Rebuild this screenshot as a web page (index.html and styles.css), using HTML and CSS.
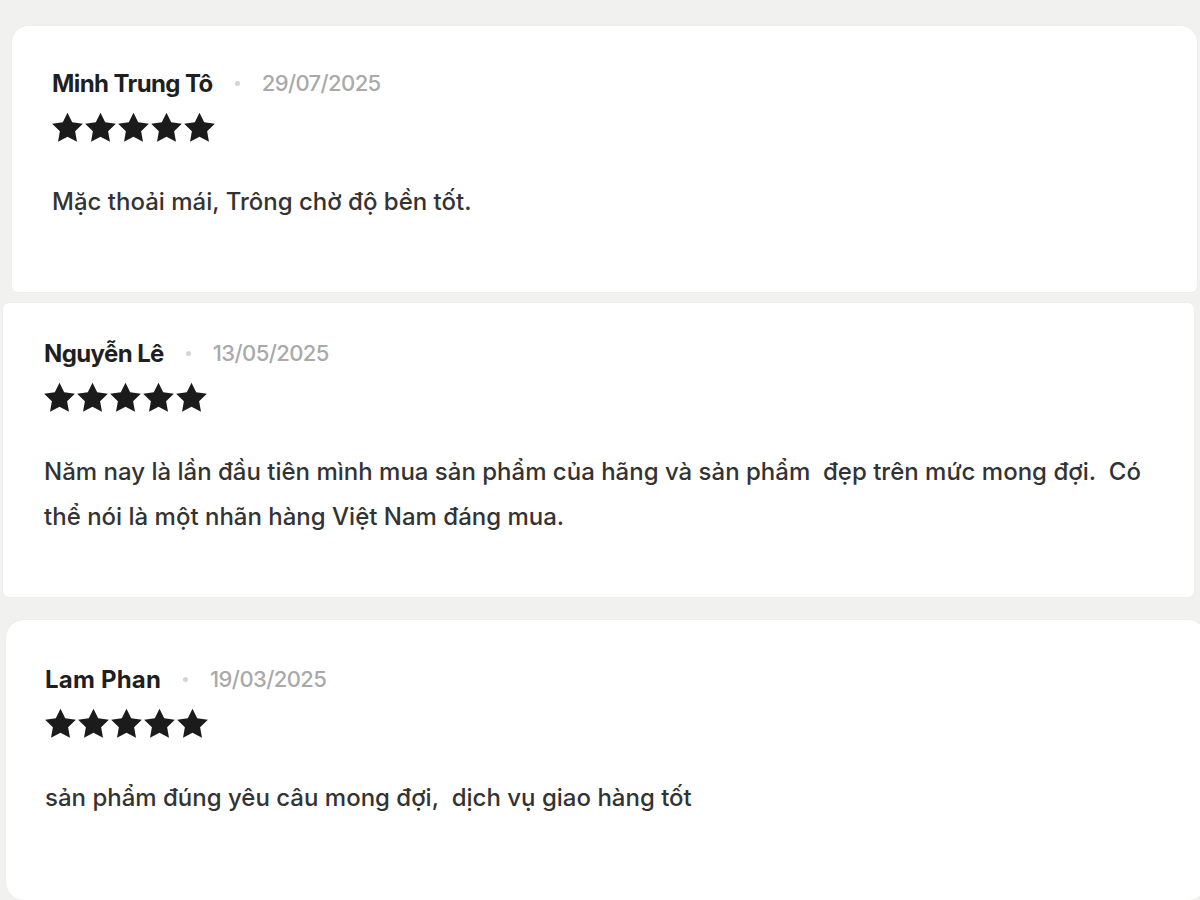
FILE: index.html
```html
<!DOCTYPE html>
<html lang="vi">
<head>
<meta charset="utf-8">
<title>Đánh giá</title>
<link rel="stylesheet" href="styles.css">
</head>
<body>
<svg width="0" height="0" class="defs">
  <defs>
    <symbol id="star" viewBox="0 0 24 24"><path d="M12 0.5L15.64 7.98L23.89 9.14L17.9 14.92L19.35 23.11L12 19.2L4.65 23.11L6.1 14.92L0.11 9.14L8.36 7.98Z"/></symbol>
  </defs>
</svg>
<main class="reviews">
  <article class="review review--one">
    <header class="review-head">
      <span class="review-name">Minh Trung Tô</span>
      <span class="review-dot"></span>
      <span class="review-date">29/07/2025</span>
    </header>
    <div class="review-stars">
      <svg class="star"><use href="#star"/></svg><svg class="star"><use href="#star"/></svg><svg class="star"><use href="#star"/></svg><svg class="star"><use href="#star"/></svg><svg class="star"><use href="#star"/></svg>
    </div>
    <p class="review-text">Mặc thoải mái, Trông chờ độ bền tốt.</p>
  </article>

  <article class="review review--two">
    <header class="review-head">
      <span class="review-name">Nguyễn Lê</span>
      <span class="review-dot"></span>
      <span class="review-date">13/05/2025</span>
    </header>
    <div class="review-stars">
      <svg class="star"><use href="#star"/></svg><svg class="star"><use href="#star"/></svg><svg class="star"><use href="#star"/></svg><svg class="star"><use href="#star"/></svg><svg class="star"><use href="#star"/></svg>
    </div>
    <p class="review-text">Năm nay là lần đầu tiên mình mua sản phẩm của hãng và sản phẩm&nbsp; đẹp trên mức mong đợi.&nbsp; Có thể nói là một nhãn hàng Việt Nam đáng mua.</p>
  </article>

  <article class="review review--three">
    <header class="review-head">
      <span class="review-name review-name--wide">Lam Phan</span>
      <span class="review-dot"></span>
      <span class="review-date">19/03/2025</span>
    </header>
    <div class="review-stars">
      <svg class="star"><use href="#star"/></svg><svg class="star"><use href="#star"/></svg><svg class="star"><use href="#star"/></svg><svg class="star"><use href="#star"/></svg><svg class="star"><use href="#star"/></svg>
    </div>
    <p class="review-text">sản phẩm đúng yêu câu mong đợi,&nbsp; dịch vụ giao hàng tốt</p>
  </article>
</main>
</body>
</html>
```
FILE: styles.css
```css
* { box-sizing: border-box; }

html, body {
  margin: 0;
  padding: 0;
  background: #f1f1f0;
  height: 900px;
  overflow: hidden;
}

body {
  font-family: "Inter", "Noto Sans", sans-serif;
  color: #2b2b2b;
}

.defs { position: absolute; width: 0; height: 0; }

.reviews {
  display: flex;
  flex-direction: column;
  padding-top: 26px;
}

.review {
  background: #ffffff;
  box-shadow: 0 0 2px rgba(0, 0, 0, 0.06);
  display: flex;
  flex-direction: column;
}

.review--one {
  margin-left: 12px;
  width: 1185px;
  height: 266px;
  padding: 43px 0 0 40px;
  border-radius: 16px 16px 6px 6px;
}

.review--two {
  margin-top: 11px;
  margin-left: 3px;
  width: 1191px;
  height: 294px;
  padding: 36px 0 0 41px;
  border-radius: 6px;
}

.review--three {
  margin-top: 23px;
  margin-left: 6px;
  width: 1200px;
  height: 280px;
  padding: 45px 0 0 39px;
  border-radius: 18px;
}

.review-head {
  display: flex;
  align-items: center;
  height: 28px;
}

.review-name {
  font-size: 24px;
  font-weight: 700;
  letter-spacing: -0.6px;
  color: #1f1f1f;
}

.review-name--wide {
  letter-spacing: 0.2px;
}

.review-dot {
  width: 5px;
  height: 5px;
  border-radius: 50%;
  background: #d4d4d4;
  margin: 0 22px 0 22px;
}

.review-date {
  font-size: 22px;
  font-weight: 500;
  letter-spacing: -0.6px;
  color: #a9a9a9;
}

.review-stars {
  display: flex;
  gap: 2px;
  margin-top: 15px;
}

.star {
  width: 31px;
  height: 31px;
  fill: #1b1b1b;
}

.review-text {
  margin: 36px 0 0 0;
  font-size: 24px;
  line-height: 45px;
  letter-spacing: 0;
  font-weight: 500;
  color: #333333;
  max-width: 1112px;
}
```
